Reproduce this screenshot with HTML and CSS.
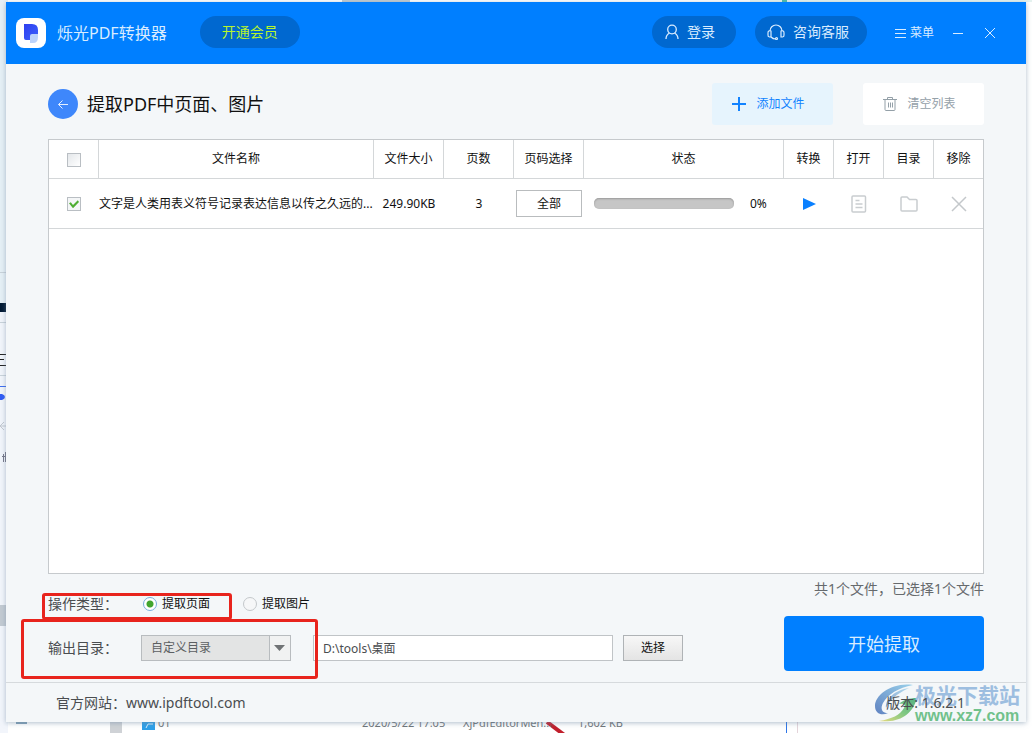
FILE: index.html
```html
<!DOCTYPE html>
<html lang="zh-CN">
<head>
<meta charset="utf-8">
<meta name="viewport" content="width=device-width, initial-scale=1">
<title>烁光PDF转换器</title>
<link rel="stylesheet" href="styles.css">
</head>
<body>
<div class="desktop" aria-hidden="true">
  <svg class="edge-left" width="8" height="733" viewBox="0 0 8 733">
    <path fill="#e6f0f6" d="M0 0h8v303H0z"/>
    <path fill="#f2f5fb" d="M0 312h8v421H0z"/>
    <path fill="#001833" d="M0 303h8v9H0z"/>
    <path stroke="#c9d2da" d="M0 272.500h8M0 322.500h8M0 375.500h8"/>
    <path stroke="#222" d="M0 354.500h8M0 359.500h4M0 365.500h8"/>
    <path stroke="#3c6cf0" d="M0 386.500h8"/>
    <path fill="#2f5bf5" d="M0 394h2q3 1 3 3t-3 3H0z"/>
    <path fill="none" stroke="#c3c8d0" d="M4 422l-4 4 4 4M0 426h6"/>
    <path fill="#c3cad2" d="M0 605h8v21H0z"/>
    <path stroke="#778" d="M3.500 454v8M5.500 452v10M2 456.500h4"/>
  </svg>
  <svg class="edge-top" width="1032" height="2" viewBox="0 0 1032 2">
    <path fill="#bfcad1" d="M342 0h68v2h-68z"/>
    <path fill="#e6f3f0" d="M750 0h282v2H750z"/>
    <path fill="#48bba8" d="M782 0h5v2h-5z"/>
  </svg>
  <div class="files">
    <svg class="files-art" width="1032" height="13" viewBox="0 0 1032 13">
      <path fill="#cfd2d6" d="M110 0h12v13h-12z"/>
      <path fill="#2e9fe8" d="M142 0h13v8h-13z"/>
      <path fill="none" stroke="#d8efff" d="M146 6l2-4h5"/>
      <path fill="#7e9db4" d="M16 0h11v2H16z"/>
      <path stroke="#888" d="M34 12.500h5M41 12.500h8M60 12.500h2M66 12.500h3"/>
      <path stroke="#c11f2c" stroke-width="4" d="M547 0l20 15"/>
      <path stroke="#2d75e8" d="M786.500 0v13"/>
      <path stroke="#e4d4da" d="M797.500 0v13"/>
    </svg>
    <span class="file-name">01</span>
    <span class="file-date">2020/5/22 17:05</span>
    <span class="file-type">XjPdfEditorMen...</span>
    <span class="file-size">1,602 KB</span>
  </div>
</div>

<main class="window">
  <header class="titlebar">
    <svg class="logo" width="30" height="30" viewBox="0 0 30 30">
      <defs><linearGradient id="lg" x1="0" y1="0" x2="1" y2="1"><stop offset="0" stop-color="#2e3ff0"/><stop offset="1" stop-color="#3c62fb"/></linearGradient></defs>
      <rect width="30" height="30" rx="8" fill="#fff"/>
      <path fill="url(#lg)" d="M8 6h8q6 0 6 6v4q-2 2-4 2h-4v4h-4q-2 0-2-2z"/>
      <path fill="#bcd3fb" d="M14 18q0-2 2-2h6v3q0 6-5 6h-3z"/>
    </svg>
    <h1 class="app-name">烁光PDF转换器</h1>
    <button class="pill pill-vip">开通会员</button>
    <div class="title-actions">
      <button class="pill pill-login">
        <svg width="14" height="16" viewBox="0 0 14 16" fill="none" stroke="#d9ecff" stroke-width="1.300"><circle cx="7" cy="5.500" r="4.300"/><path d="M1 15q0-4 3.500-6M13 15q0-4-3.500-6"/></svg>
        登录
      </button>
      <button class="pill pill-service">
        <svg width="18" height="16" viewBox="0 0 18 16" fill="none" stroke="#d9ecff" stroke-width="1.200"><path d="M3 7a6 6 0 0 1 12 0M4 7v6H2.500A1.800 1.800 0 0 1 1 11V9a2 2 0 0 1 3-2zM14 7v6h1.500a1.800 1.800 0 0 0 1.500-2V9a2 2 0 0 0-3-2zM4 13q2 2 4.500 2"/><circle cx="9.500" cy="14.500" r="1"/></svg>
        咨询客服
      </button>
      <button class="plain plain-menu">
        <svg width="11" height="9" viewBox="0 0 11 9" stroke="#d9ecff"><path d="M0 .5h11M0 4.500h11M0 8.500h11"/></svg>
        菜单
      </button>
      <button class="plain" aria-label="最小化"><svg width="10" height="10" viewBox="0 0 10 10" stroke="#d9ecff"><path d="M0 5.500h10"/></svg></button>
      <button class="plain plain-close" aria-label="关闭"><svg width="10" height="10" viewBox="0 0 10 10" stroke="#d9ecff"><path d="M0 0l10 10M10 0L0 10"/></svg></button>
    </div>
  </header>

  <section class="toolbar">
    <button class="back" aria-label="返回"><svg width="10" height="10" viewBox="0 0 10 10" fill="none" stroke="#e4efff"><path d="M10 5.500H.5M4.500 1.500l-4 4 4 4"/></svg></button>
    <h2 class="page-title">提取PDF中页面、图片</h2>
    <button class="tool tool-add">
      <svg width="14" height="14" viewBox="0 0 14 14" stroke="#1283ff" stroke-width="2"><path d="M7 0v14M0 7h14"/></svg>
      添加文件
    </button>
    <button class="tool tool-clear">
      <svg width="14" height="14" viewBox="0 0 14 14" fill="none" stroke="#94a0a8"><path d="M0 2.500h14M4.500 2V.5h5V2M2 3v9.500q0 1 1 1h8q1 0 1-1V3M5.500 5.500v5M7.500 5.500v5M9.500 5.500v5"/></svg>
      清空列表
    </button>
  </section>

  <section class="list">
    <table class="grid">
      <colgroup><col class="c-check"><col><col class="c-mid"><col class="c-mid"><col class="c-mid"><col class="c-state"><col class="c-act"><col class="c-act"><col class="c-act"><col class="c-last"></colgroup>
      <thead>
        <tr>
          <th><input class="check" type="checkbox" aria-label="全选"></th>
          <th>文件名称</th><th>文件大小</th><th>页数</th><th>页码选择</th><th>状态</th><th>转换</th><th>打开</th><th>目录</th><th>移除</th>
        </tr>
      </thead>
      <tbody>
        <tr>
          <td><input class="check" type="checkbox" checked aria-label="选择文件"></td>
          <td class="name">文字是人类用表义符号记录表达信息以传之久远的...</td>
          <td>249.90KB</td>
          <td>3</td>
          <td><button class="range">全部</button></td>
          <td><div class="state"><progress class="bar" value="0" max="100" aria-label="进度"></progress><span>0%</span></div></td>
          <td><button class="icon" aria-label="转换"><svg width="14" height="14" viewBox="0 0 14 14"><path fill="#0a80ff" d="M1 1l13 6-13 6z"/></svg></button></td>
          <td><button class="icon" aria-label="打开"><svg width="16" height="18" viewBox="0 0 16 18" fill="none" stroke="#c9cdd0" stroke-width="1.500"><rect x="1" y="1" width="13.500" height="16" rx="1"/><path d="M4.500 5.500h4M4.500 9h7M4.500 12.500h7"/></svg></button></td>
          <td><button class="icon" aria-label="目录"><svg width="18" height="16" viewBox="0 0 18 16" fill="none" stroke="#c9cdd0" stroke-width="1.500"><path d="M1 14V2q0-1 1-1h5l2.500 2.500H16q1 0 1 1V14q0 1-1 1H2q-1 0-1-1z"/></svg></button></td>
          <td><button class="icon" aria-label="移除"><svg width="16" height="16" viewBox="0 0 16 16" stroke="#c4c8cb" stroke-width="1.500"><path d="M1 1l14 14M15 1L1 15"/></svg></button></td>
        </tr>
      </tbody>
    </table>
  </section>

  <section class="options">
    <div class="fields">
      <div class="field field-type">
        <span class="label">操作类型：</span>
        <label class="choice"><input class="radio" type="radio" name="kind" checked>提取页面</label>
        <label class="choice"><input class="radio" type="radio" name="kind">提取图片</label>
        <span class="mark mark-type"></span>
      </div>
      <div class="field field-output">
        <label class="label" for="dir">输出目录：</label>
        <span class="select-box">
          <select class="select" id="dir"><option>自定义目录</option></select>
          <svg class="arrow" width="21" height="24" viewBox="0 0 21 24"><path fill="#f1f2f2" d="M0 0h21v24H0z"/><path stroke="#b8bcbf" d="M.5 0v24"/><path fill="#707375" d="M5 9h11l-5.500 6z"/></svg>
        </span>
        <input class="path" type="text" value="D:\tools\桌面" aria-label="目录路径">
        <button class="browse">选择</button>
        <span class="mark mark-output"></span>
      </div>
    </div>
    <div class="submit">
      <p class="count">共1个文件，已选择1个文件</p>
      <button class="start">开始提取</button>
    </div>
  </section>

  <footer class="footer">
    <p class="site">官方网站：<a class="site-link" href="#">www.ipdftool.com</a></p>
    <div class="brand">
      <svg class="brand-mark" width="48" height="40" viewBox="0 0 48 40">
        <defs>
          <linearGradient id="sky" x1="0" y1="1" x2="1" y2="0"><stop offset="0" stop-color="#466fb8"/><stop offset="1" stop-color="#8bcbe9"/></linearGradient>
          <linearGradient id="leaf" x1="0" y1="1" x2="1" y2="0"><stop offset="0" stop-color="#e6d76a"/><stop offset=".5" stop-color="#6cc06f"/><stop offset="1" stop-color="#3aa66e"/></linearGradient>
        </defs>
        <path fill="url(#sky)" d="M39 2C18-1 1 12 1 23c0 8 7 10 13 7-6 0-8-4-5-10C14 11 24 5 39 2z"/>
        <path fill="url(#sky)" opacity=".75" d="M35 5C21 7 11 16 12 25c3-7 10-14 23-20z"/>
        <path fill="url(#leaf)" d="M5 38c17 2 33-4 38-23-8 0-14 2-18 6 5-1 7 1 5 4-4 7-12 11-25 13z"/>
      </svg>
      <div class="brand-text"><span class="brand-name">极光下载站</span><span class="brand-url">www.xz7.com</span></div>
    </div>
    <p class="version">版本: 1.6.2.1</p>
  </footer>
</main>
</body>
</html>
```
FILE: styles.css
```css
* { box-sizing: border-box; }

body {
  margin: 0;
  min-height: 100vh;
  padding: 2px 6px 11px;
  display: flex;
  position: relative;
  overflow: hidden;
  background: #fff;
  color: #111;
  font: 12px/16px "Noto Sans", "Noto Sans CJK SC", sans-serif;
}

h1, h2, p { margin: 0; font-weight: 400; }

button, input, select { font: inherit; color: inherit; margin: 0; }

button {
  border: 0;
  padding: 0;
  background: none;
  display: inline-flex;
  align-items: center;
  justify-content: center;
  cursor: pointer;
}

/* Desktop behind the window */
.desktop { position: absolute; inset: 0; overflow: hidden; }
.edge-left, .edge-top { position: absolute; left: 0; top: 0; }
.files {
  position: absolute;
  left: 0;
  right: 0;
  bottom: 0;
  height: 13px;
  color: #6f7478;
  font-size: 11px;
  line-height: 12px;
}
.files-art { position: absolute; left: 0; top: 2px; }
.file-name, .file-date, .file-type, .file-size { position: absolute; top: -3px; white-space: nowrap; }
.file-name { left: 158px; }
.file-date { left: 362px; }
.file-type { left: 463px; }
.file-size { left: 578px; }

.window {
  flex: 1;
  min-width: 0;
  display: flex;
  flex-direction: column;
  position: relative;
  background: #f4f7f9;
  box-shadow: 0 1px 5px #6f8aa390;
}

/* Title bar */
.titlebar {
  height: 62px;
  padding: 0 31px 0 10px;
  display: flex;
  align-items: center;
  background: #007fff;
  color: #d9ecff;
}
.app-name { margin-left: 11px; font-size: 16px; line-height: 24px; white-space: nowrap; }
.pill { height: 32px; margin-bottom: 2px; border-radius: 16px; background: #0068d0; font-size: 14px; gap: 8px; white-space: nowrap; }
.pill-vip { width: 100px; margin-left: 33px; color: #b8f52b; }
.pill-login { width: 84px; padding-right: 8px; }
.pill-service { width: 112px; margin-left: 19px; padding-right: 6px; }
.title-actions { margin-left: auto; display: flex; align-items: center; }
.plain-menu { margin: 0 19px 0 28px; gap: 4px; white-space: nowrap; }
.plain-close { margin-left: 22px; }

/* Toolbar */
.toolbar { padding: 19px 42px 14px; display: flex; align-items: center; }
.back { width: 30px; height: 30px; border-radius: 50%; background: #3e87fb; }
.page-title { margin: 0 auto 0 9px; font-size: 18px; line-height: 26px; white-space: nowrap; }
.tool { width: 121px; height: 42px; padding-right: 8px; border-radius: 3px; gap: 10px; white-space: nowrap; }
.tool-add { background: #e6f4fd; color: #1283ff; }
.tool-clear { margin-left: 30px; background: #fff; color: #94a0a8; }

/* File list */
.list { flex: 1; margin: 0 42px; border: 1px solid #c6cacd; background: #fff; }
.grid { width: 100%; table-layout: fixed; border-collapse: separate; border-spacing: 0; }
.c-check, .c-act { width: 50px; }
.c-last { width: 49px; }
.c-mid { width: 70px; }
.c-state { width: 200px; }
.grid th, .grid td { padding: 0; border-bottom: 1px solid #d4d7d9; text-align: center; vertical-align: middle; font-weight: 400; }
.grid th { height: 39px; border-right: 1px solid #d4d7d9; }
.grid th:last-child { border-right: 0; }
.grid td { height: 50px; }
.grid .name { text-align: left; white-space: nowrap; overflow: hidden; }
.range { width: 66px; height: 27px; border: 1px solid #b9bcbe; background: #fff; }
.state { display: flex; align-items: center; gap: 16px; padding-left: 10px; }
.bar { appearance: none; width: 140px; height: 11px; border: 0; border-radius: 5px; overflow: hidden; background: #c6c6c6; box-shadow: inset 0 1px 2px #999; }
.bar::-webkit-progress-bar { background: transparent; }
.icon { vertical-align: middle; }

.check { appearance: none; display: inline-block; width: 14px; height: 14px; border: 1px solid #b9bec3; background: linear-gradient(135deg, #e4e7ea, #fff); vertical-align: middle; }
.check:checked { display: inline-grid; place-items: center; background: #f4f6f7; }
.check:checked::before { content: ""; width: 10px; height: 8px; background: #4fae33; clip-path: polygon(0 38%, 18% 25%, 40% 58%, 88% 0, 100% 22%, 40% 100%); }

/* Options */
.options { padding: 5px 42px 11px; display: flex; justify-content: space-between; align-items: flex-end; gap: 24px; }
.fields { flex: 1; padding-bottom: 10px; }
.field { display: flex; align-items: center; position: relative; }
.label { width: 93px; flex: none; color: #4a4d50; font-size: 14px; line-height: 20px; }
.field-type { height: 20px; margin-bottom: 21px; }
.choice { display: flex; align-items: center; gap: 5px; margin: 0 31px 0 2px; white-space: nowrap; }
.radio { appearance: none; width: 14px; height: 14px; border: 1px solid #c4c8cb; border-radius: 50%; background: #f6f7f8; }
.radio:checked { border-color: #79aede; background: radial-gradient(circle, #42a52f 3px, #fff 4px); }
.select-box { position: relative; width: 150px; height: 26px; flex: none; }
.select { appearance: none; width: 100%; height: 26px; padding: 0 24px 0 9px; border: 1px solid #b8bcbf; border-radius: 0; background: #e3e4e4; color: #5c5f62; }
.arrow { position: absolute; top: 1px; right: 1px; pointer-events: none; }
.path { flex: 0 1 300px; min-width: 0; height: 26px; margin: 0 10px 0 22px; padding: 0 9px; border: 1px solid #c0c4c7; background: #fff; color: #4a4d50; }
.browse { width: 60px; height: 26px; flex: none; border: 1px solid #afb3b6; background: linear-gradient(#f7f7f7, #e4e4e4); }
.mark { position: absolute; border: 3px solid #e8241d; border-radius: 3px; pointer-events: none; }
.mark-type { left: -6px; top: -1px; width: 190px; height: 27px; }
.mark-output { left: -27px; top: -16px; width: 297px; height: 60px; }
.submit { width: 200px; display: flex; flex-direction: column; gap: 17px; }
.count { align-self: flex-end; color: #666a6d; font-size: 14px; line-height: 20px; white-space: nowrap; }
.start { height: 55px; border-radius: 4px; background: #007fff; color: #d9ecff; font-size: 18px; }

/* Footer */
.footer { height: 40px; padding: 0 61px 0 50px; display: flex; align-items: center; justify-content: space-between; border-top: 1px solid #d6dadd; position: relative; color: #4a4d50; font-size: 14px; line-height: 20px; }
.site-link { color: inherit; text-decoration: none; }
.version { position: relative; }
.brand { position: absolute; right: 6px; top: 0; display: flex; opacity: .85; }
.brand-mark { margin-right: -7px; }
.brand-text { display: flex; flex-direction: column; font-weight: 700; white-space: nowrap; }
.brand-name { color: #8fb5dc; font-size: 21px; line-height: 24px; }
.brand-url { color: #59b878; font-family: "Liberation Sans", sans-serif; font-size: 16px; line-height: 18px; }
```
